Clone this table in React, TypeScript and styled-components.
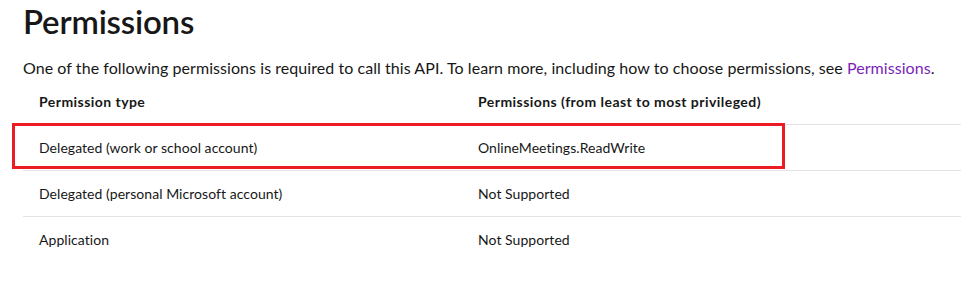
import React from "react";
import styled, { createGlobalStyle } from "styled-components";

const Global = createGlobalStyle`
  html, body { margin: 0; padding: 0; background: #ffffff; }
  body { font-family: Lato, "Open Sans", Arial, sans-serif; color: #171717; }
`;

const Page = styled.div`
  padding: 0 0 0 23px;
  width: 961px;
  box-sizing: border-box;
`;

const Title = styled.h1`
  margin: 0;
  padding-top: 1px;
  font-size: 33px;
  line-height: 40px;
  font-weight: 600;
  letter-spacing: -0.2px;
  color: #171717;
`;

const Intro = styled.p`
  margin: 16px 0 0 0;
  font-size: 16px;
  line-height: 22px;
  letter-spacing: 0.06px;
  color: #171717;
`;

const Link = styled.a`
  color: #7a1fb8;
  text-decoration: none;
`;

const Table = styled.div`
  display: grid;
  grid-template-columns: 439px 1fr;
`;

const Row = styled.div`
  display: contents;
`;

const Cell = styled.div<{ $header?: boolean; $last?: boolean }>`
  position: relative;
  height: 45px;
  display: flex;
  align-items: center;
  padding: 0 16px;
  font-size: 14px;
  font-weight: ${(p) => (p.$header ? 700 : 400)};
  letter-spacing: ${(p) => (p.$header ? "0.45px" : "0.05px")};
  color: #171717;
  border-bottom: 1px solid ${(p) => (p.$last ? "transparent" : "#e3e3e3")};
  white-space: nowrap;
`;

const Highlight = styled.div`
  position: absolute;
  left: -11px;
  top: -2px;
  width: 767px;
  height: 40px;
  border: 3px solid #ed1c24;
  pointer-events: none;
`;

const rows = [
  ["Delegated (work or school account)", "OnlineMeetings.ReadWrite"],
  ["Delegated (personal Microsoft account)", "Not Supported"],
  ["Application", "Not Supported"],
];

export default function App() {
  return (
    <>
      <Global />
      <Page>
        <Title>Permissions</Title>
        <Intro>
          One of the following permissions is required to call this API. To learn more, including how to choose
          permissions, see <Link href="#">Permissions</Link>.
        </Intro>
        <Table>
          <Row>
            <Cell $header>Permission type</Cell>
            <Cell $header>Permissions (from least to most privileged)</Cell>
          </Row>
          {rows.map((r, i) => (
            <Row key={i}>
              <Cell $last={i === rows.length - 1}>
                {i === 0 && <Highlight />}
                {r[0]}
              </Cell>
              <Cell $last={i === rows.length - 1}>{r[1]}</Cell>
            </Row>
          ))}
        </Table>
      </Page>
    </>
  );
}
